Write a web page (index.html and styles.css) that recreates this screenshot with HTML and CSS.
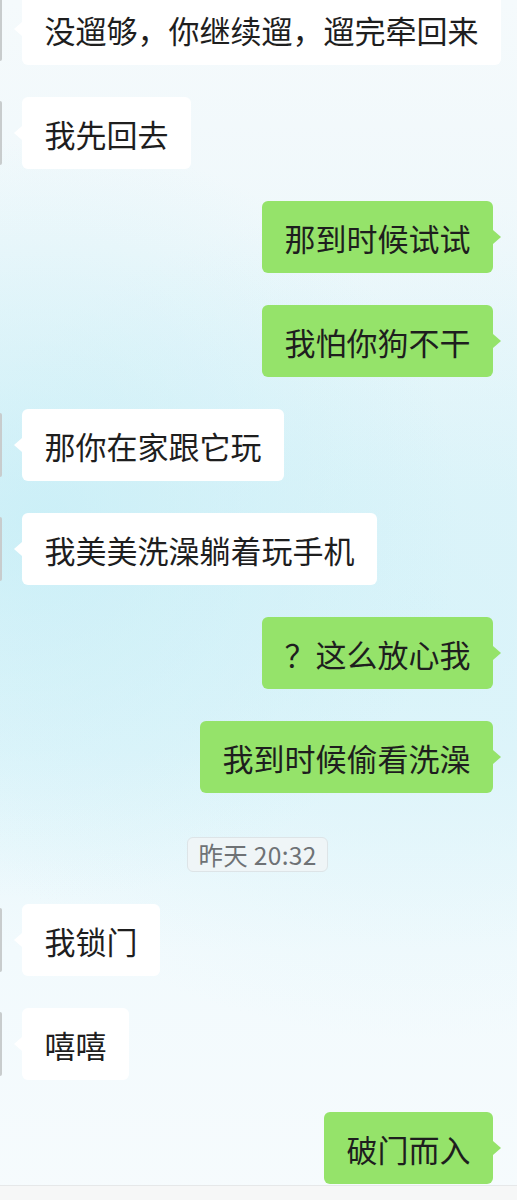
FILE: index.html
```html
<!DOCTYPE html>
<html lang="zh-CN">
<head>
<meta charset="utf-8">
<title>聊天</title>
<link rel="stylesheet" href="styles.css">
</head>
<body>
<div class="page">
  <div class="chat">
    <div class="row left"><div class="avatar"></div><div class="bubble">没遛够，你继续遛，遛完牵回来</div></div>
    <div class="row left"><div class="avatar"></div><div class="bubble">我先回去</div></div>
    <div class="row right"><div class="bubble">那到时候试试</div></div>
    <div class="row right"><div class="bubble">我怕你狗不干</div></div>
    <div class="row left"><div class="avatar"></div><div class="bubble">那你在家跟它玩</div></div>
    <div class="row left"><div class="avatar"></div><div class="bubble">我美美洗澡躺着玩手机</div></div>
    <div class="row right"><div class="bubble">？这么放心我</div></div>
    <div class="row right"><div class="bubble">我到时候偷看洗澡</div></div>
    <div class="time-row"><span class="time">昨天 20:32</span></div>
    <div class="row left"><div class="avatar"></div><div class="bubble">我锁门</div></div>
    <div class="row left"><div class="avatar"></div><div class="bubble">嘻嘻</div></div>
    <div class="row right"><div class="bubble">破门而入</div></div>
  </div>
  <div class="bottombar"></div>
</div>
</body>
</html>
```

FILE: styles.css
```css
html, body {
  margin: 0;
  padding: 0;
}
body {
  font-family: "Noto Sans CJK SC", "Noto Sans", sans-serif;
  color: #1e1e1e;
}
.page {
  height: 1200px;
  overflow: hidden;
  display: flex;
  flex-direction: column;
  background:
    radial-gradient(ellipse 420px 380px at 40px 520px, rgba(195, 237, 246, 0.7), rgba(195, 237, 246, 0) 100%),
    radial-gradient(ellipse 520px 420px at 420px 620px, rgba(208, 241, 248, 0.55), rgba(208, 241, 248, 0) 100%),
    linear-gradient(to bottom, #f5fafc 0px, #eff8fb 250px, #e2f5fa 500px, #e4f6fb 750px, #f2fafd 950px, #f6fbfd 1200px);
}
.chat {
  flex: 1;
  display: flex;
  flex-direction: column;
  gap: 32px;
  margin-top: -7px;
  overflow: hidden;
}
.row {
  display: flex;
  align-items: flex-start;
}
.row.left {
  justify-content: flex-start;
}
.row.right {
  justify-content: flex-end;
  padding-right: 24px;
}
.avatar {
  width: 2px;
  height: 64px;
  margin-top: 4px;
  margin-right: 20px;
  background: #c8cccd;
  border-radius: 0 2px 2px 0;
}
.bubble {
  position: relative;
  height: 72px;
  display: flex;
  align-items: center;
  padding: 0 22.5px;
  font-size: 31px;
  line-height: 1;
  border-radius: 6px;
  white-space: nowrap;
  box-sizing: border-box;
}
.left .bubble {
  background: #ffffff;
}
.right .bubble {
  background: #95e36a;
}
.bubble::before {
  content: "";
  position: absolute;
  top: 29px;
  width: 0;
  height: 0;
  border-top: 7px solid transparent;
  border-bottom: 7px solid transparent;
}
.left .bubble::before {
  left: -8px;
  border-right: 8px solid #ffffff;
}
.right .bubble::before {
  right: -8px;
  border-left: 8px solid #95e36a;
}
.time-row {
  display: flex;
  justify-content: center;
  margin-top: 12px;
  padding-right: 2px;
}
.time {
  height: 35px;
  box-sizing: border-box;
  display: flex;
  align-items: center;
  padding: 0 10px;
  font-size: 24.5px;
  letter-spacing: 0.3px;
  color: #6e7275;
  background: #eff5f7;
  border: 1px solid #dde4e7;
  border-radius: 6px;
}
.bottombar {
  height: 15px;
  flex: none;
  background: #f6f7f7;
  border-top: 1px solid #e6e8e9;
  box-sizing: border-box;
}
```
